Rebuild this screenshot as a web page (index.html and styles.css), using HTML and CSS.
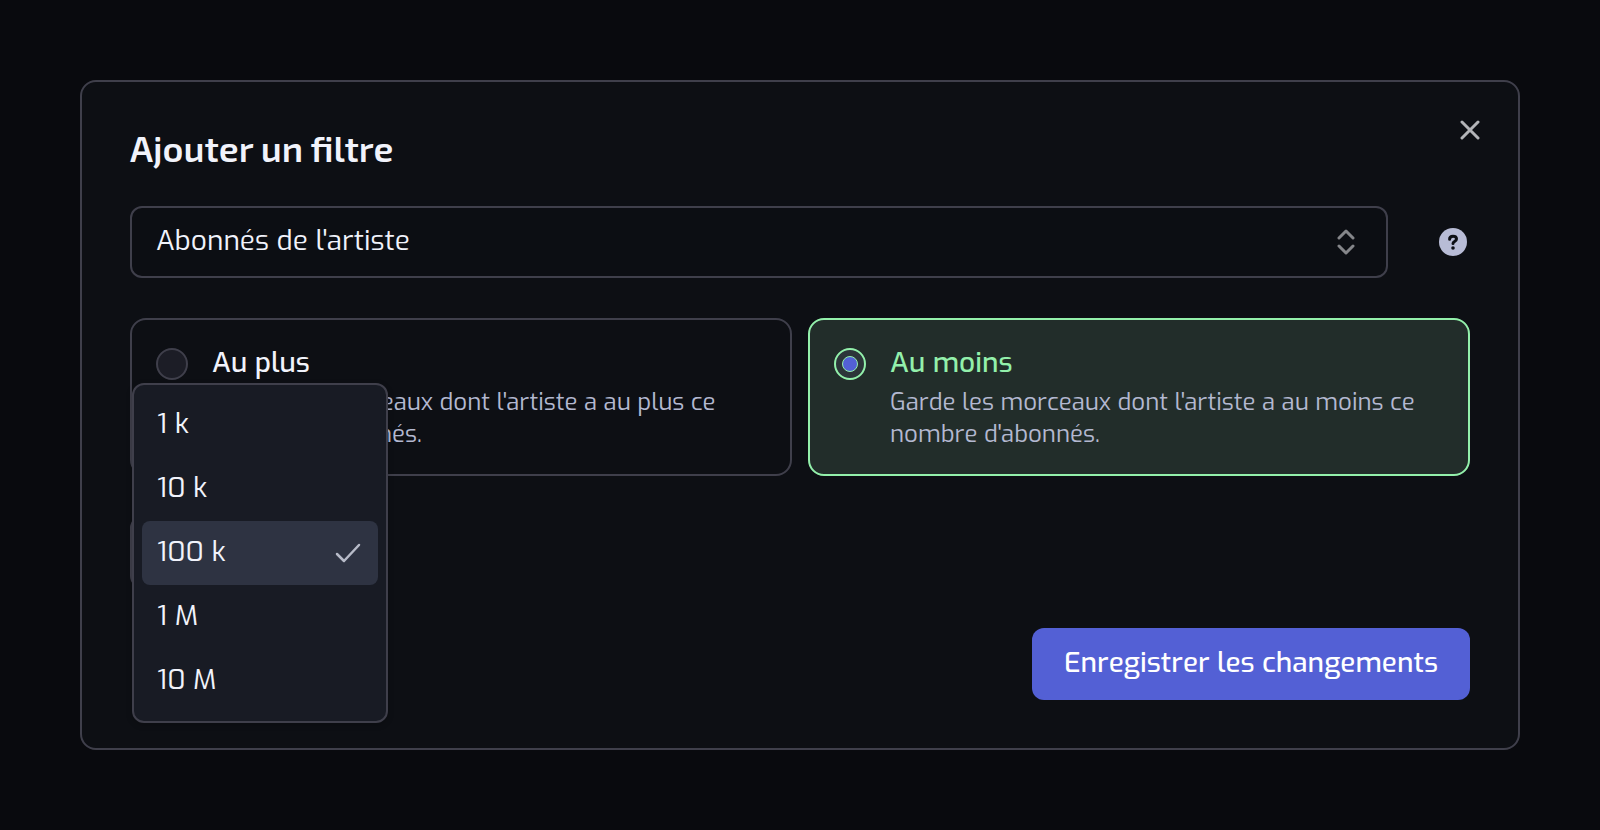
FILE: index.html
```html
<!DOCTYPE html>
<html lang="fr">
<head>
<meta charset="utf-8">
<meta name="viewport" content="width=device-width, initial-scale=1">
<title>Ajouter un filtre</title>
<link rel="stylesheet" href="styles.css">
</head>
<body>
<form class="dialog" role="dialog" aria-labelledby="dialog-title">
  <button class="close" type="button" aria-label="Fermer">
    <svg class="icon" viewBox="0 0 20 20" width="20" height="20" aria-hidden="true"><path d="M2 2l16 16M18 2L2 18"/></svg>
  </button>
  <h1 class="title" id="dialog-title">Ajouter un filtre</h1>

  <div class="filter-row">
    <div class="select-wrap">
      <select class="select" aria-label="Type de filtre">
        <option selected>Abonnés de l'artiste</option>
      </select>
      <svg class="icon select-icon" viewBox="0 0 18 26" width="18" height="26" aria-hidden="true"><path d="M2 9l7-7 7 7M2 17l7 7 7-7"/></svg>
    </div>
    <button class="help" type="button" aria-label="Aide">
      <svg viewBox="0 0 28 28" width="28" height="28" aria-hidden="true">
        <circle class="help-disc" cx="14" cy="14" r="14"/>
        <path class="help-hook" d="M10.600 11.200C10.600 9.200 12 8.200 14 8.200s3.500 1.200 3.500 2.900c0 2.500-3.500 2.400-3.500 4.300"/>
        <circle class="help-dot" cx="14" cy="20" r="1.800"/>
      </svg>
    </button>
  </div>

  <div class="choices" role="radiogroup" aria-label="Comparaison">
    <label class="choice">
      <input class="radio" type="radio" name="compare">
      <span class="choice-text">
        <span class="choice-name">Au plus</span>
        <span class="choice-desc">Garde les morceaux dont l'artiste a au plus ce nombre d'abonnés.</span>
      </span>
    </label>
    <label class="choice">
      <input class="radio" type="radio" name="compare" checked>
      <span class="choice-text">
        <span class="choice-name">Au moins</span>
        <span class="choice-desc">Garde les morceaux dont l'artiste a au moins ce nombre d'abonnés.</span>
      </span>
    </label>
  </div>

  <div class="amount">
    <button class="amount-trigger" type="button" aria-haspopup="listbox" aria-expanded="true" aria-label="Nombre d'abonnés"></button>
    <div class="menu" role="listbox" aria-label="Nombre d'abonnés">
      <button class="option" type="button" role="option" aria-selected="false">1 k</button>
      <button class="option" type="button" role="option" aria-selected="false">10 k</button>
      <button class="option" type="button" role="option" aria-selected="true">100 k
        <svg class="icon check" viewBox="0 0 24 18" width="24" height="18" aria-hidden="true"><path d="M1 10l7 7L23 1"/></svg>
      </button>
      <button class="option" type="button" role="option" aria-selected="false">1 M</button>
      <button class="option" type="button" role="option" aria-selected="false">10 M</button>
    </div>
  </div>

  <div class="actions">
    <button class="save" type="submit">Enregistrer les changements</button>
  </div>
</form>
</body>
</html>
```
FILE: styles.css
```css
* {
  box-sizing: border-box;
}

body {
  margin: 0;
  min-height: 100vh;
  padding: 80px;
  background: #090a0e;
  color: #f1f3fb;
  font-family: Exo, "Exo 2", Roboto, "Noto Sans", sans-serif;
  font-size: 28px;
}

button,
select {
  margin: 0;
  color: inherit;
  font: inherit;
}

.icon {
  fill: none;
  stroke: currentColor;
  stroke-width: 3;
  stroke-linecap: round;
  stroke-linejoin: round;
}

.dialog {
  position: relative;
  display: flex;
  flex-direction: column;
  gap: 40px;
  padding: 48px;
  border: 2px solid #3f3f4b;
  border-radius: 16px;
  background: #0d0f14;
}

.title {
  margin: 0 0 -4px;
  padding-bottom: 4px;
  font-family: "Exo 2", Exo, Roboto, sans-serif;
  font-size: 36px;
  font-weight: 600;
  line-height: 36px;
}

.close {
  position: absolute;
  top: 32px;
  right: 32px;
  display: grid;
  place-items: center;
  width: 32px;
  height: 32px;
  padding: 0;
  border: 0;
  background: none;
  color: #b3b4b8;
}

.filter-row {
  display: flex;
  align-items: center;
  gap: 51px;
}

.select-wrap {
  position: relative;
  flex: 1;
}

.select {
  display: block;
  appearance: none;
  width: 100%;
  height: 72px;
  padding: 0 64px 4px 24px;
  border: 2px solid #3f3f4b;
  border-radius: 12px;
  background: #0c0e13;
}

.select-icon {
  position: absolute;
  top: 23px;
  right: 33px;
  color: #85868a;
  pointer-events: none;
}

.help {
  display: flex;
  padding: 0;
  margin-right: 3px;
  border: 0;
  background: none;
}

.help-disc {
  fill: #b8bcd6;
}

.help-hook {
  fill: none;
  stroke: #0d0f14;
  stroke-width: 3;
  stroke-linecap: round;
}

.help-dot {
  fill: #0d0f14;
}

.choices {
  display: grid;
  grid-template-columns: 1fr 1fr;
  gap: 16px;
}

.choice {
  display: flex;
  gap: 24px;
  padding: 24px;
  border: 2px solid #3f3f4b;
  border-radius: 16px;
}

.choice:has(:checked) {
  border-color: #93f0ab;
  background: #222d2a;
}

.radio {
  flex: none;
  appearance: none;
  display: grid;
  place-items: center;
  width: 32px;
  height: 32px;
  margin: 4px 0 0;
  border: 2px solid #3f3f4b;
  border-radius: 50%;
  background: #1c1d26;
}

.radio:checked {
  border-color: #93f0ab;
  background: #2c3539;
}

.radio:checked::before {
  content: "";
  width: 14px;
  height: 14px;
  border: 1px solid #93f0ab;
  border-radius: 50%;
  background: #5360d5;
}

.choice-text {
  display: flex;
  flex-direction: column;
  gap: 4px;
}

.choice-name {
  font-weight: 500;
  line-height: 38px;
}

.choice:has(:checked) .choice-name {
  color: #93f0ab;
}

.choice-desc {
  color: #b3b8d0;
  font-size: 24px;
  line-height: 32px;
}

.amount {
  position: relative;
  width: 256px;
}

.amount-trigger {
  display: block;
  width: 100%;
  height: 72px;
  border: 2px solid #3f3f4b;
  border-radius: 12px;
  background: #0c0e13;
}

.menu {
  position: absolute;
  bottom: -135px;
  left: 2px;
  width: 256px;
  padding: 8px;
  border: 2px solid #3f3f4b;
  border-radius: 12px;
  background: #181b24;
  box-shadow: 0 2px 6px rgb(0 0 0 / 20%);
}

.option {
  display: flex;
  align-items: center;
  justify-content: space-between;
  width: 100%;
  height: 64px;
  padding: 0 18px 4px 15px;
  border: 0;
  border-radius: 8px;
  background: none;
  text-align: left;
}

.option[aria-selected="true"] {
  background: #2e3342;
}

.check {
  overflow: visible;
  margin-top: 3px;
  stroke-width: 2.5;
  color: #b7bbc8;
}

.actions {
  display: flex;
  justify-content: flex-end;
}

.save {
  height: 72px;
  padding: 0 32px 4px;
  border: 0;
  border-radius: 12px;
  background: #5360d5;
  color: #fff;
  font-weight: 500;
}
```
